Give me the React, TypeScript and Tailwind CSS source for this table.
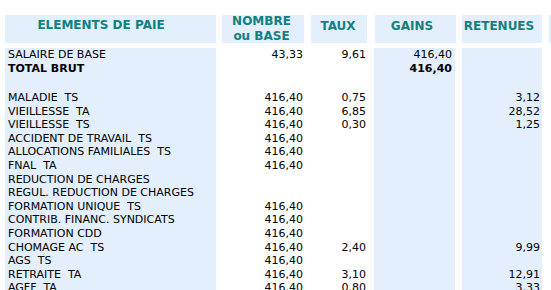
import React from "react";

type Row = { l: string; n?: string; t?: string; g?: string; r?: string; bold?: boolean; blank?: boolean };

const rows: Row[] = [
  { l: "SALAIRE DE BASE", n: "43,33", t: "9,61", g: "416,40" },
  { l: "TOTAL BRUT", g: "416,40", bold: true },
  { l: "", blank: true },
  { l: "MALADIE  TS", n: "416,40", t: "0,75", r: "3,12" },
  { l: "VIEILLESSE  TA", n: "416,40", t: "6,85", r: "28,52" },
  { l: "VIEILLESSE  TS", n: "416,40", t: "0,30", r: "1,25" },
  { l: "ACCIDENT DE TRAVAIL  TS", n: "416,40" },
  { l: "ALLOCATIONS FAMILIALES  TS", n: "416,40" },
  { l: "FNAL  TA", n: "416,40" },
  { l: "REDUCTION DE CHARGES" },
  { l: "REGUL. REDUCTION DE CHARGES" },
  { l: "FORMATION UNIQUE  TS", n: "416,40" },
  { l: "CONTRIB. FINANC. SYNDICATS", n: "416,40" },
  { l: "FORMATION CDD", n: "416,40" },
  { l: "CHOMAGE AC  TS", n: "416,40", t: "2,40", r: "9,99" },
  { l: "AGS  TS", n: "416,40" },
  { l: "RETRAITE  TA", n: "416,40", t: "3,10", r: "12,91" },
  { l: "AGFF  TA", n: "416,40", t: "0,80", r: "3,33" },
  { l: "" },
];

function Col({ k, className }: { k: keyof Row; className: string }) {
  return (
    <div className={className}>
      {rows.map((row, i) =>
        row.blank ? (
          <div key={i} className="h-[15.8px]" />
        ) : (
          <div key={i} className={`h-[13.6px] leading-[13.6px] whitespace-pre ${row.bold ? "font-bold" : ""}`}>
            {(row[k] as string) || "\u00a0"}
          </div>
        )
      )}
    </div>
  );
}

export default function App() {
  const hdr = "bg-[#e3effd] h-[28px] shrink-0 text-[12px] font-bold text-[#128080] leading-[15px] text-center";
  return (
    <div
      className="w-[551px] h-[290px] overflow-hidden bg-white text-black"
      style={{ fontFamily: '"DejaVu Sans", Verdana, sans-serif' }}
    >
      <div className="pt-[15px] pl-[5px]">
        <div className="flex">
          <div className={`${hdr} w-[211px] pt-[3px] pr-[19px]`}>ELEMENTS DE PAIE</div>
          <div className={`${hdr} w-[82px] ml-[6px] pr-[3px]`}>
            <div className="-mt-[1px]">NOMBRE</div>
            <div>ou BASE</div>
          </div>
          <div className={`${hdr} w-[56px] ml-[7px] pt-[4px] pr-[2px]`}>TAUX</div>
          <div className={`${hdr} w-[81px] ml-[8px] pt-[4px] pr-[7px]`}>GAINS</div>
          <div className={`${hdr} w-[80px] ml-[6px] pt-[4px] pr-[6px]`}>RETENUES</div>
          <div className={`${hdr} w-[40px] ml-[7px]`} />
        </div>
        <div className="flex mt-[5px] text-[11px]">
          <Col k="l" className="w-[211px] shrink-0 bg-[#e3effd] pl-[3px]" />
          <Col k="n" className="w-[82px] shrink-0 ml-[6px] text-right pr-[1px]" />
          <Col k="t" className="w-[56px] shrink-0 ml-[7px] text-right pr-[1px]" />
          <Col k="g" className="w-[81px] shrink-0 ml-[7px] bg-[#e3effd] text-right pr-[3px]" />
          <Col k="r" className="w-[80px] shrink-0 ml-[7px] bg-[#e3effd] text-right pr-[2px]" />
        </div>
      </div>
    </div>
  );
}
